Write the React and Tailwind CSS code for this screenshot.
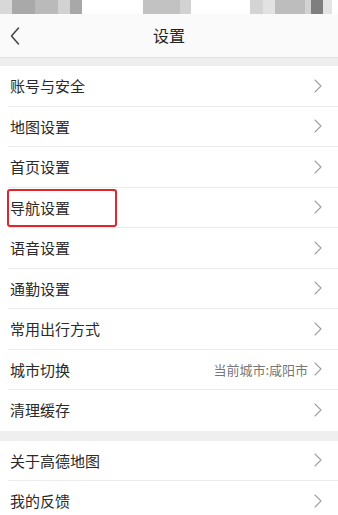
import React from 'react';

const font = { fontFamily: '"Noto Sans CJK SC", "Noto Sans", sans-serif' };

const Chevron = () => (
  <svg width="8" height="14" viewBox="0 0 8 14" fill="none" className="shrink-0">
    <path d="M1 1l6 6-6 6" stroke="#a0a0a0" strokeWidth="1.1" strokeLinecap="round" strokeLinejoin="round" />
  </svg>
);

const Row = ({ label, value, highlight, last }) => (
  <div className="relative flex items-center h-[40.5px] pl-[10px] pr-[16px] pb-[1px] bg-white">
    <span className="text-[15px] text-[#2a2a2a] leading-none">{label}</span>
    <div className="ml-auto flex items-center gap-[6px]">
      {value && <span className="text-[13px] text-[#777] leading-none">{value}</span>}
      <Chevron />
    </div>
    {!last && <div className="absolute left-[8px] right-0 bottom-0 h-px bg-[#ececec]" />}
    {highlight && (
      <div className="absolute left-[7px] top-[1px] w-[110px] h-[38px] border-2 border-[#e0262a] rounded-[3px]" />
    )}
  </div>
);

export default function App() {
  const group1 = [
    { label: '账号与安全' },
    { label: '地图设置' },
    { label: '首页设置' },
    { label: '导航设置', highlight: true },
    { label: '语音设置' },
    { label: '通勤设置' },
    { label: '常用出行方式' },
    { label: '城市切换', value: '当前城市:咸阳市' },
    { label: '清理缓存', last: true },
  ];
  const group2 = [{ label: '关于高德地图' }, { label: '我的反馈', last: true }];

  return (
    <div className="w-[338px] h-[515px] overflow-hidden bg-white" style={font}>
      <div className="flex h-[14px] bg-white">
        <div className="w-[12px] bg-[#d8d8d8]" />
        <div className="w-[23px] bg-[#a9a9a9]" />
        <div className="w-[23px] bg-[#bababa]" />
        <div className="w-[12px] bg-[#d2d2d2]" />
        <div className="w-[12px] bg-[#a8a8a8]" />
        <div className="w-[61px]" />
        <div className="w-[37px] bg-[#c2c2c2]" />
        <div className="w-[11px] bg-[#d2d2d2]" />
        <div className="w-[59px]" />
        <div className="w-[13px] bg-[#d4d4d4]" />
        <div className="w-[12px] bg-[#e2e2e2]" />
        <div className="w-[30px] bg-[#bdbdbd]" />
        <div className="w-[6px] bg-[#d2d2d2]" />
        <div className="w-[12px] bg-[#7f7f7f]" />
        <div className="w-[9px] bg-[#e4e4e4]" />
      </div>
      <div className="relative flex items-center justify-center h-[43px] pb-[1px] bg-[#fafafa]">
        <svg width="10" height="18" viewBox="0 0 10 18" fill="none" className="absolute left-[10px] top-[13px]">
          <path d="M8.5 1L1.5 9l7 8" stroke="#444" strokeWidth="1.5" strokeLinecap="round" strokeLinejoin="round" />
        </svg>
        <span className="text-[16px] text-[#222]">设置</span>
      </div>
      <div className="h-[9px] bg-[#efefef] border-t border-[#e2e2e2]" />
      {group1.map((r) => (
        <Row key={r.label} {...r} />
      ))}
      <div className="h-[10px] bg-[#efefef]" />
      {group2.map((r) => (
        <Row key={r.label} {...r} />
      ))}
    </div>
  );
}
